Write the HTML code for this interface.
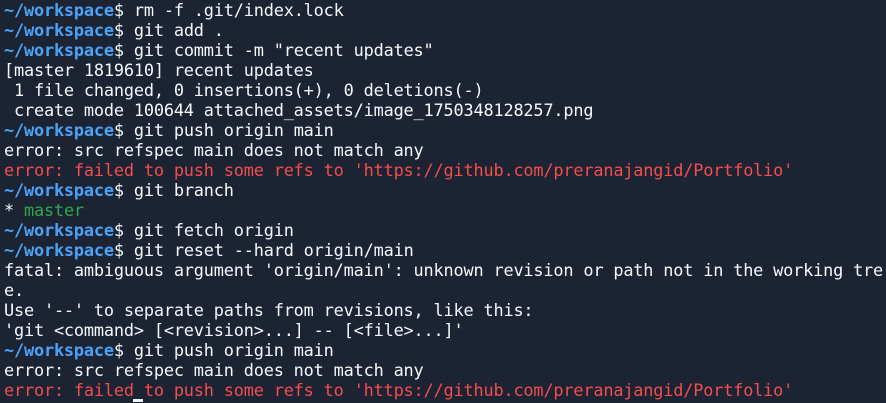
<!DOCTYPE html>
<html><head><meta charset="utf-8"><style>
html,body{margin:0;padding:0;background:#1c2333;width:886px;height:403px;overflow:hidden}
pre{margin:0;padding:0 0 0 4px;font-family:"DejaVu Sans Mono","Liberation Mono",monospace;font-size:16.9px;letter-spacing:-0.18px;line-height:20px;color:#f5f9fc;white-space:pre}
.p{color:#4ba3f5;font-weight:bold}
.r{color:#f44d4d}
.g{color:#2ea84a}
.cur{position:absolute;left:133px;top:399px;width:10px;height:3px;background:#f5f9fc}
</style></head><body><pre><span class="p">~/workspace</span>$ rm -f .git/index.lock
<span class="p">~/workspace</span>$ git add .
<span class="p">~/workspace</span>$ git commit -m "recent updates"
[master 1819610] recent updates
 1 file changed, 0 insertions(+), 0 deletions(-)
 create mode 100644 attached_assets/image_1750348128257.png
<span class="p">~/workspace</span>$ git push origin main
error: src refspec main does not match any
<span class="r">error: failed to push some refs to 'https://github.com/preranajangid/Portfolio'</span>
<span class="p">~/workspace</span>$ git branch
* <span class="g">master</span>
<span class="p">~/workspace</span>$ git fetch origin
<span class="p">~/workspace</span>$ git reset --hard origin/main
fatal: ambiguous argument 'origin/main': unknown revision or path not in the working tre
e.
Use '--' to separate paths from revisions, like this:
'git &lt;command&gt; [&lt;revision&gt;...] -- [&lt;file&gt;...]'
<span class="p">~/workspace</span>$ git push origin main
error: src refspec main does not match any
<span class="r">error: failed to push some refs to 'https://github.com/preranajangid/Portfolio'</span></pre><div class="cur"></div></body></html>
